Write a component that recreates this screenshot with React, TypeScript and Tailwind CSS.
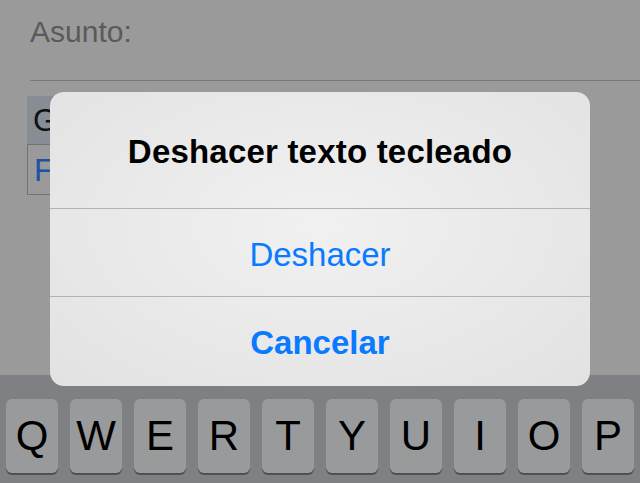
const keys = ["Q", "W", "E", "R", "T", "Y", "U", "I", "O", "P"];

export default function App() {
  return (
    <div className="relative w-[640px] h-[483px] overflow-hidden bg-[#9a9a9a] flex flex-col font-['Liberation_Sans',Arial,sans-serif]">
      {/* Mail compose behind the dimmed overlay */}
      <div className="ml-[30px] h-[81px] pt-[15px] border-b border-[#7a7a7a] shrink-0">
        <span className="text-[30px] leading-[34px] text-[#5a5a5a]">Asunto:</span>
      </div>

      <div className="ml-[27px] mt-[15px] w-[60px] shrink-0">
        <div className="h-[48px] bg-[#878c95] flex items-center pl-[6px]">
          <span className="text-[31px] leading-none text-[#111]">G</span>
        </div>
        <div className="h-[51px] border border-[#727272] flex items-center pl-[6px]">
          <span className="text-[32px] leading-none text-[#1c52a3]">F</span>
        </div>
      </div>

      {/* Keyboard */}
      <div className="mt-auto h-[108px] bg-[#7f8084] pt-[24px] px-[6px] shrink-0">
        <div className="flex gap-[12px]">
          {keys.map((k) => (
            <div
              key={k}
              className="w-[52px] h-[74px] rounded-[6px] bg-[#999a9b] shadow-[0_2px_0_#4f5053] flex items-center justify-center"
            >
              <span className="text-[42px] leading-none text-black">{k}</span>
            </div>
          ))}
        </div>
      </div>

      {/* Alert */}
      <div className="absolute left-[50px] top-[92px] w-[540px] h-[294px] rounded-[14px] overflow-hidden bg-[radial-gradient(ellipse_at_50%_45%,#f1f1f1,#e2e2e2)] flex flex-col">
        <div className="h-[117px] pt-[4px] flex items-center justify-center border-b border-[#b3b3b3]">
          <span className="text-[33px] font-bold text-black tracking-[0.2px]">Deshacer texto tecleado</span>
        </div>
        <div className="h-[88px] pt-[4px] flex items-center justify-center border-b border-[#b3b3b3]">
          <span className="text-[33px] text-[#0a7aff]">Deshacer</span>
        </div>
        <div className="flex-1 pt-[2px] flex items-center justify-center">
          <span className="text-[33px] font-bold text-[#0a7aff]">Cancelar</span>
        </div>
      </div>
    </div>
  );
}
